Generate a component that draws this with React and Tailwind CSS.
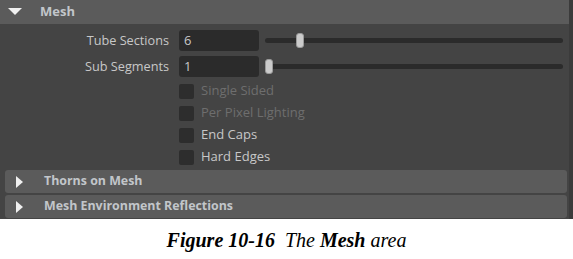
import React from 'react';

const ui = { fontFamily: '"Open Sans", "DejaVu Sans", sans-serif' };

const DownArrow = () => (
    <svg width="14" height="8" viewBox="0 0 14 8" className="ml-[8px] mr-[18px]">
        <path d="M0 0h14L7 7z" fill="#f0f0f0" />
    </svg>
);

const RightArrow = () => (
    <svg width="7" height="12" viewBox="0 0 7 12" className="ml-[11px] mr-[21px]">
        <path d="M0 0l7 6-7 6z" fill="#f0f0f0" />
    </svg>
);

const SliderRow = ({ label, value, thumb }) => (
    <div className="flex items-center h-[21px]">
        <div className="w-[169px] text-right text-[12.7px] text-[#c8c8c8]">{label}</div>
        <div className="ml-[10px] w-[80px] h-[21px] rounded-[3px] bg-[#2b2b2b] flex items-center pl-[5px] text-[13px] text-[#c8c8c8]">
            {value}
        </div>
        <div className="relative ml-[6px] w-[298px] h-[21px] flex items-center">
            <div className="w-full h-[5px] rounded-full bg-[#2b2b2b]" />
            <div
                className="absolute top-[3px] w-[8px] h-[15px] rounded-[3px] bg-[#cbcbcb] border border-[#9a9a9a]"
                style={{ left: thumb }}
            />
        </div>
    </div>
);

const CheckRow = ({ label, disabled }) => (
    <div className="flex items-center h-[22px] pl-[179px]">
        <div className="w-[15px] h-[15px] rounded-[2px] bg-[#2d2d2d]" />
        <span className={`ml-[7px] text-[13px] ${disabled ? 'text-[#6e6e6e]' : 'text-[#c8c8c8]'}`}>{label}</span>
    </div>
);

const Collapsed = ({ title }) => (
    <div className="ml-[5px] mr-[2px] h-[23px] rounded-[3px] bg-[#5b5b5b] flex items-center">
        <RightArrow />
        <span className="text-[12.4px] font-bold text-[#c2c6ca]">{title}</span>
    </div>
);

export default function App() {
    return (
        <div className="w-[573px] h-[259px] bg-white flex flex-col" style={ui}>
            <div className="h-[219px] bg-[#444444] flex">
                <div className="flex-1 flex flex-col">
                    <div className="h-[24px] bg-[#5b5b5b] flex items-center">
                        <DownArrow />
                        <span className="text-[13px] font-bold text-[#c2c6ca]">Mesh</span>
                    </div>
                    <div className="pt-[6px] flex flex-col gap-[5px]">
                        <SliderRow label="Tube Sections" value="6" thumb={31} />
                        <SliderRow label="Sub Segments" value="1" thumb={0} />
                    </div>
                    <div className="pt-[3px] flex flex-col">
                        <CheckRow label="Single Sided" disabled />
                        <CheckRow label="Per Pixel Lighting" disabled />
                        <CheckRow label="End Caps" />
                        <CheckRow label="Hard Edges" />
                    </div>
                    <div className="mt-[2px] flex flex-col gap-[2px]">
                        <Collapsed title="Thorns on Mesh" />
                        <Collapsed title="Mesh Environment Reflections" />
                    </div>
                </div>
                <div className="w-[4px] bg-[#3b3b3b]" />
            </div>
            <div className="flex-1 flex items-center justify-center pt-[2px]">
                <p className="text-[20px] text-black whitespace-pre" style={{ fontFamily: '"Liberation Serif", serif' }}>
                    <span className="italic font-bold">Figure 10-16</span>
                    <span className="italic">{'  The '}</span>
                    <span className="italic font-bold">Mesh</span>
                    <span className="italic">{' area'}</span>
                </p>
            </div>
        </div>
    );
}
